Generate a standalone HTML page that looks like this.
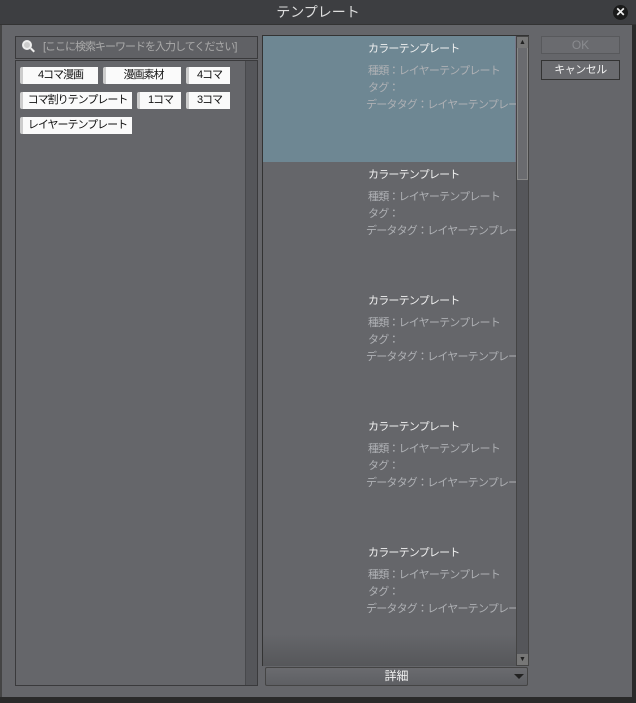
<!DOCTYPE html><html><head><meta charset="utf-8"><style>
*{margin:0;padding:0;box-sizing:border-box}
body{width:636px;height:703px;background:#2a2a2a;font-family:"Liberation Sans","Noto Sans CJK JP",sans-serif;font-size:12px;position:relative;overflow:hidden}
.a{position:absolute;white-space:nowrap}
#win{left:0;top:0;width:632px;height:697px;background:#65666a;border-left:2px solid #444}
#title{left:0;top:0;width:636px;height:25px;background:#3d3e41;color:#ddd;font-size:14px;text-align:center;line-height:25px;border-bottom:1px solid #333}
.tag{position:absolute;height:17px;background:#fafafa;border-radius:2px 0 0 2px;color:#111;font-size:11px;letter-spacing:-1px;line-height:17px;text-align:center;border-left:3px solid #ccc;white-space:nowrap;overflow:hidden}
.item{position:absolute;left:263px;width:253px;height:126px;overflow:hidden}
.t1{position:absolute;left:105px;top:4px;color:#f0f0f0;font-size:11px;letter-spacing:-0.8px;white-space:nowrap}
.t2{position:absolute;left:105px;color:#aeb0b4;font-size:11px;letter-spacing:-0.8px;white-space:nowrap}
</style></head><body>
<div id="win" class="a"></div>
<div id="title" class="a">テンプレート</div>
<div class="a" style="left:613px;top:5px;width:15px;height:15px;border-radius:50%;background:#1a1a1a;color:#eee;font-size:12px;line-height:15px;text-align:center;font-weight:bold">✕</div>
<div class="a" style="left:15px;top:36px;width:243px;height:23px;background:#606165;border:1px solid #3a3a3c;color:#aaa;font-size:11px;letter-spacing:-1px;line-height:21px;padding-left:27px;overflow:hidden">[ここに検索キーワードを入力してください]</div>
<div class="a" style="left:22px;top:40px;width:10px;height:10px;border-radius:50%;border:2px solid #eee;background:#ccc"></div>
<div class="a" style="left:30px;top:49px;width:5px;height:2px;background:#eee;transform:rotate(45deg)"></div>
<div class="a" style="left:15px;top:60px;width:243px;height:626px;border:1px solid #3a3a3c;background:#65666a"></div>
<div class="a" style="left:245px;top:61px;width:12px;height:624px;background:#55565a;border-left:1px solid #48494c"></div>
<div class="tag" style="left:20px;top:67px;width:78px">4コマ漫画</div>
<div class="tag" style="left:103px;top:67px;width:78px">漫画素材</div>
<div class="tag" style="left:186px;top:67px;width:44px">4コマ</div>
<div class="tag" style="left:20px;top:92px;width:112px">コマ割りテンプレート</div>
<div class="tag" style="left:137px;top:92px;width:44px">1コマ</div>
<div class="tag" style="left:186px;top:92px;width:44px">3コマ</div>
<div class="tag" style="left:20px;top:117px;width:112px">レイヤーテンプレート</div>
<div class="a" style="left:262px;top:35px;width:267px;height:631px;border:1px solid #333;border-bottom:none;background:linear-gradient(#65666a 95%,#56575a)"></div>
<div class="item" style="top:36px;background:#6e8793;border-right:1px solid #778"></div>
<div class="item" style="top:36px"><div class="t1">カラーテンプレート</div><div class="t2" style="top:26px">種類：レイヤーテンプレート</div><div class="t2" style="top:43px">タグ：</div><div class="t2" style="top:60px;left:103px">データタグ：レイヤーテンプレート</div></div>
<div class="item" style="top:162px"><div class="t1">カラーテンプレート</div><div class="t2" style="top:26px">種類：レイヤーテンプレート</div><div class="t2" style="top:43px">タグ：</div><div class="t2" style="top:60px;left:103px">データタグ：レイヤーテンプレート</div></div>
<div class="item" style="top:288px"><div class="t1">カラーテンプレート</div><div class="t2" style="top:26px">種類：レイヤーテンプレート</div><div class="t2" style="top:43px">タグ：</div><div class="t2" style="top:60px;left:103px">データタグ：レイヤーテンプレート</div></div>
<div class="item" style="top:414px"><div class="t1">カラーテンプレート</div><div class="t2" style="top:26px">種類：レイヤーテンプレート</div><div class="t2" style="top:43px">タグ：</div><div class="t2" style="top:60px;left:103px">データタグ：レイヤーテンプレート</div></div>
<div class="item" style="top:540px"><div class="t1">カラーテンプレート</div><div class="t2" style="top:26px">種類：レイヤーテンプレート</div><div class="t2" style="top:43px">タグ：</div><div class="t2" style="top:60px;left:103px">データタグ：レイヤーテンプレート</div></div>
<div class="a" style="left:516px;top:36px;width:13px;height:630px;background:#55565a;border:1px solid #444"></div>
<div class="a" style="left:517px;top:37px;width:11px;height:143px;background:#6a6b6f;border:1px solid #888"></div>
<div class="a" style="left:517px;top:37px;width:11px;height:11px;background:#777;color:#222;font-size:7px;text-align:center;line-height:11px">▲</div>
<div class="a" style="left:517px;top:654px;width:11px;height:11px;background:#777;color:#222;font-size:7px;text-align:center;line-height:11px">▼</div>
<div class="a" style="left:265px;top:667px;width:263px;height:19px;background:linear-gradient(#6a6b6f,#5e5f63);border:1px solid #444;border-radius:2px;color:#f2f2f2;text-align:center;line-height:17px;font-size:12px">詳細</div>
<div class="a" style="left:514px;top:674px;width:0;height:0;border-left:5px solid transparent;border-right:5px solid transparent;border-top:5px solid #222"></div>
<div class="a" style="left:541px;top:36px;width:79px;height:18px;background:#6a6b6f;border:1px solid #58595c;color:#8a8b8f;text-align:center;line-height:16px;font-size:12px">OK</div>
<div class="a" style="left:541px;top:60px;width:79px;height:20px;background:#6a6b6f;border:1px solid #333;color:#f2f2f2;text-align:center;line-height:18px;font-size:11px;letter-spacing:-0.5px">キャンセル</div>
</body></html>
